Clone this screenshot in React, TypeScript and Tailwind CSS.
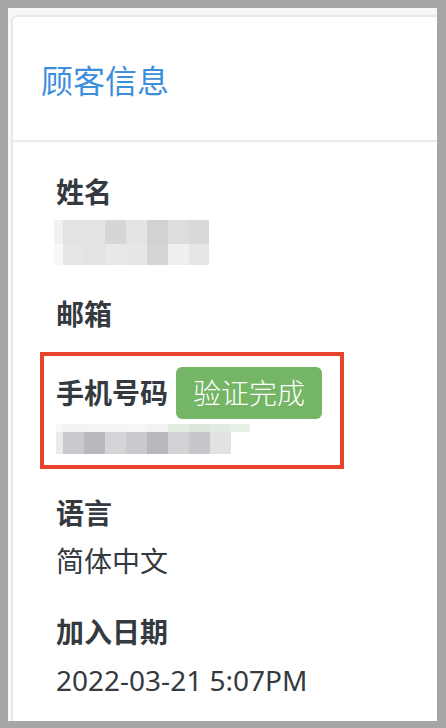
const nameCols = [54, 63, 84, 105, 126, 147, 168, 189, 209];
const nameRows: string[][] = [
  ["#f0f1f1", "#e2e3e5", "#e2e3e5", "#d5d6d8", "#e4e4e4", "#d1d2d4", "#dcdddf", "#d8d9db"],
  ["#f8f8f8", "#e5e5e6", "#e2e3e4", "#e7e8ea", "#e7e7e8", "#d4d5d7", "#efefef", "#e6e6e7"],
];

const phoneCols = [56, 63, 84, 105, 126, 147, 168, 189, 210, 231, 250];
const phoneRows: string[][] = [
  ["#f8f8f8", "#f3f3f3", "#f4f4f4", "#f4f4f4", "#f6f6f6", "#f2f2f2", "#e3ebe2", "#d9e6d8", "#e2ebe1", "#e8efe7"],
  ["#e8e9e9", "#c9cacd", "#b9babd", "#d4d5d7", "#c9cacd", "#b8b9bc", "#d2d3d5", "#c6c7ca", "#e2e2e3", "#ffffff"],
];

// pixelated placeholder for hidden personal data
function Mosaic({ cols, rows, heights }: { cols: number[]; rows: string[][]; heights: number[] }) {
  const x0 = cols[0];
  const w = cols[cols.length - 1] - x0;
  const h = heights.reduce((a, b) => a + b, 0);
  let y = 0;
  return (
    <svg width={w} height={h} viewBox={`0 0 ${w} ${h}`} shapeRendering="crispEdges" className="block">
      {rows.map((row, r) => {
        const top = y;
        y += heights[r];
        return row.map((c, i) => (
          <rect key={`${r}-${i}`} x={cols[i] - x0} y={top} width={cols[i + 1] - cols[i]} height={heights[r]} fill={c} />
        ));
      })}
    </svg>
  );
}

function Label({ children }: { children: React.ReactNode }) {
  return <div className="text-[28px] font-bold leading-[40px] text-[#343a40]">{children}</div>;
}

function Field({ label, value }: { label: string; value?: React.ReactNode }) {
  return (
    <div className="mb-[31px]">
      <Label>{label}</Label>
      {value && <div className="mt-2 text-[28px] leading-[40px] text-[#343a40]">{value}</div>}
    </div>
  );
}

export default function App() {
  return (
    <div
      className="w-[446px] h-[728px] bg-[#a6a6a6] pt-2 pl-2 pr-[9px] pb-[7px]"
      style={{ fontFamily: '"Noto Sans", "Noto Sans CJK SC", sans-serif' }}
    >
      <div className="h-full bg-[#f7f7f7] overflow-hidden pt-[7px] pl-[3px]">
        <div className="w-[460px] h-full bg-white border-t-2 border-l-2 border-[#e8e8e8] rounded-tl-[6px]">
          {/* header */}
          <div className="h-[125px] flex items-center pl-[28px] pt-[4px] border-b-2 border-[#ebebeb]">
            <h2 className="text-[32px] leading-[40px] text-[#3d8fdb]">顾客信息</h2>
          </div>

          {/* details */}
          <div className="pl-[43px] pt-[30px]">
            <div className="mb-[29px]">
              <Label>姓名</Label>
              <div className="mt-2 -ml-[2px]">
                <Mosaic cols={nameCols} rows={nameRows} heights={[24, 21]} />
              </div>
            </div>

            <div className="mb-[33px]">
              <Label>邮箱</Label>
            </div>

            <div className="relative mb-[39px]">
              <div className="flex items-center gap-2">
                <Label>手机号码</Label>
                <span className="h-[52px] flex items-center px-[17px] rounded-[6px] bg-[#74b566] text-white text-[28px] font-light">
                  验证完成
                </span>
              </div>
              <div className="mt-[5px]">
                <Mosaic cols={phoneCols} rows={phoneRows} heights={[8, 22]} />
              </div>
              <div className="absolute -left-[16px] -top-[15px] w-[304px] h-[117px] border-4 border-[#e8432d]" />
            </div>

            <Field label="语言" value="简体中文" />
            <Field label="加入日期" value="2022-03-21 5:07PM" />
          </div>
        </div>
      </div>
    </div>
  );
}
